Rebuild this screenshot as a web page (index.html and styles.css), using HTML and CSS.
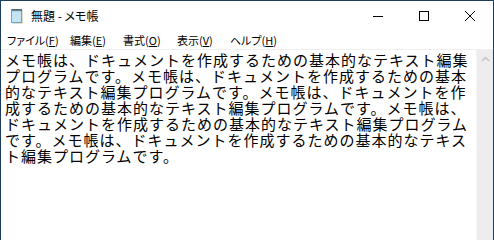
FILE: index.html
```html
<!DOCTYPE html>
<html lang="ja">
<head>
<meta charset="utf-8">
<title>無題 - メモ帳</title>
<link rel="stylesheet" href="styles.css">
</head>
<body>
<div class="window">
  <div class="titlebar">
    <svg class="app-icon" width="16" height="16" viewBox="0 0 16 16">
      <rect x="3.5" y="2.5" width="10" height="13" fill="#c9b98a"/>
      <rect x="2.5" y="1.5" width="10" height="13" fill="#a9d6ec" stroke="#6aa6c8"/>
      <rect x="3" y="4" width="9" height="10" fill="#c4e5f4"/>
      <path d="M4 1v2M6 1v2M8 1v2M10 1v2M12 1v2" stroke="#333" stroke-width="1"/>
    </svg>
    <span class="title">無題 - メモ帳</span>
    <div class="controls">
      <div class="ctl"><svg width="10" height="10" viewBox="0 0 10 10"><path d="M0 5.5h10" stroke="#000"/></svg></div>
      <div class="ctl"><svg width="10" height="10" viewBox="0 0 10 10"><rect x="0.5" y="0.5" width="9" height="9" fill="none" stroke="#000"/></svg></div>
      <div class="ctl"><svg width="10" height="10" viewBox="0 0 10 10"><path d="M0 0L10 10M10 0L0 10" stroke="#000" stroke-width="1"/></svg></div>
    </div>
  </div>
  <div class="menubar">
    <span class="menu m-file">ファイル(<u>F</u>)</span>
    <span class="menu m-edit">編集(<u>E</u>)</span>
    <span class="menu m-format">書式(<u>O</u>)</span>
    <span class="menu m-view">表示(<u>V</u>)</span>
    <span class="menu m-help">ヘルプ(<u>H</u>)</span>
  </div>
  <div class="client">
    <div class="editor">
      <div class="line">メモ帳は、ドキュメントを作成するための基本的なテキスト編集</div>
      <div class="line">プログラムです。メモ帳は、ドキュメントを作成するための基本</div>
      <div class="line">的なテキスト編集プログラムです。メモ帳は、ドキュメントを作</div>
      <div class="line">成するための基本的なテキスト編集プログラムです。メモ帳は、</div>
      <div class="line">ドキュメントを作成するための基本的なテキスト編集プログラム</div>
      <div class="line">です。メモ帳は、ドキュメントを作成するための基本的なテキス</div>
      <div class="line">ト編集プログラムです。</div>
    </div>
    <div class="scrollbar">
      <svg class="arrow" width="9" height="6" viewBox="0 0 9 6"><path d="M1 5L4.5 1.5L8 5" fill="none" stroke="#c4c4c4" stroke-width="1.5"/></svg>
    </div>
  </div>
</div>
</body>
</html>
```

FILE: styles.css
```css
html, body {
  margin: 0;
  padding: 0;
  background: #fff;
}
.window {
  box-sizing: border-box;
  width: 494px;
  height: 240px;
  border: 1px solid #1d3d5e;
  border-bottom: none;
  display: flex;
  flex-direction: column;
  font-family: "Noto Sans CJK JP", "Noto Sans", sans-serif;
  color: #000;
  overflow: hidden;
}
.titlebar {
  height: 29px;
  display: flex;
  align-items: center;
  flex-shrink: 0;
}
.app-icon {
  margin-left: 8px;
  margin-right: 6px;
}
.title {
  font-size: 12px;
  line-height: 16px;
  font-feature-settings: "palt";
}
.controls {
  margin-left: auto;
  display: flex;
  height: 29px;
}
.ctl {
  width: 46px;
  display: flex;
  align-items: center;
  justify-content: center;
}
.menubar {
  height: 19px;
  display: flex;
  align-items: center;
  border-bottom: 1px solid #f0f0f0;
  flex-shrink: 0;
  padding-left: 6px;
}
.menu {
  font-size: 11px;
  line-height: 16px;
  font-feature-settings: "palt";
  white-space: nowrap;
}
.m-file { width: 63px; }
.m-edit { width: 53px; }
.m-format { width: 54px; }
.m-view { width: 53px; }
.menu u {
  text-underline-offset: 1px;
}
.client {
  flex: 1;
  display: flex;
  min-height: 0;
}
.editor {
  flex: 1;
  padding: 2px 0 0 4px;
  font-size: 15px;
  letter-spacing: 1px;
  line-height: 16px;
  white-space: nowrap;
}
.scrollbar {
  width: 16px;
  background: #ededed;
  border-left: 1px solid #f4f4f4;
  display: flex;
  justify-content: center;
  align-items: flex-start;
}
.arrow {
  margin-top: 6px;
}
```
